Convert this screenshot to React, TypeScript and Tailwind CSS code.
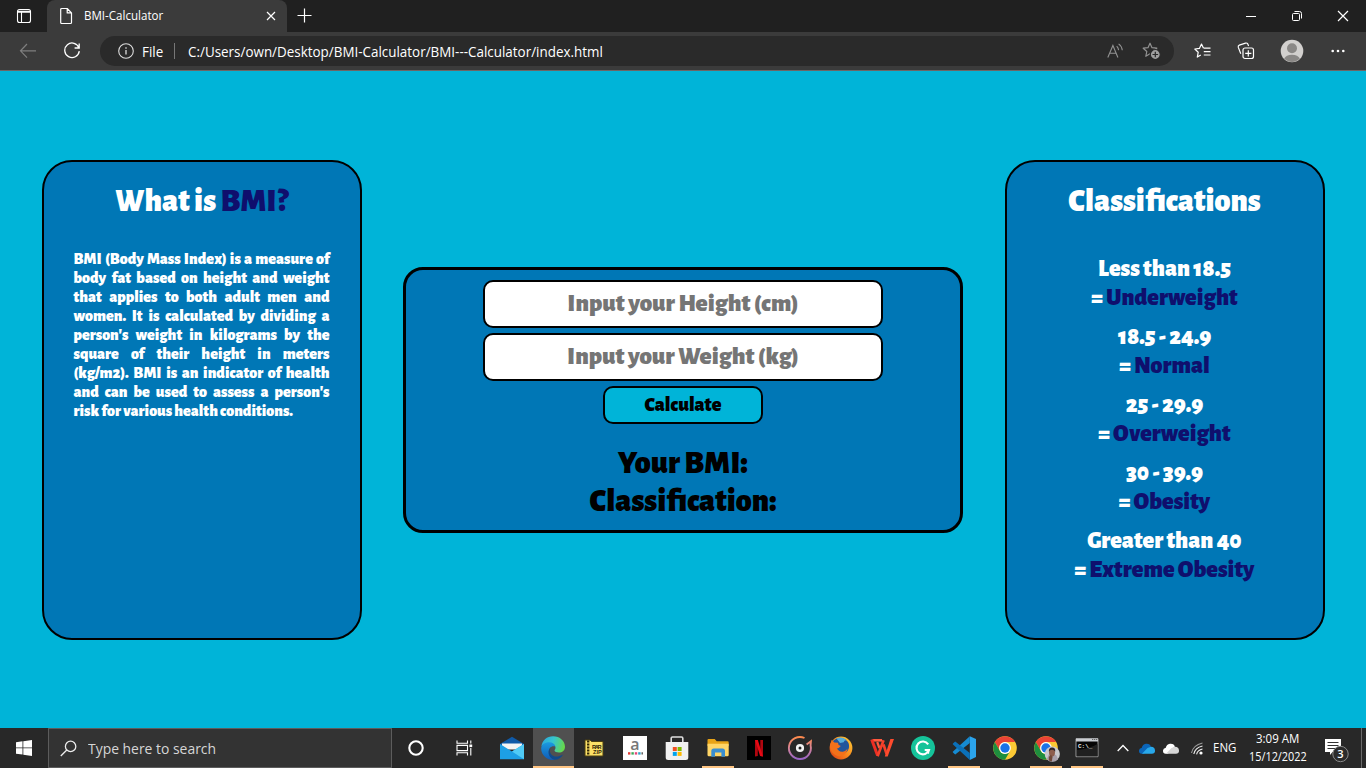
import { useLayoutEffect, useRef, useState, type ReactNode } from "react";

/** One line of text condensed or widened to an exact width. */
function Fit({ w, className = "", children }: { w: number; className?: string; children: ReactNode }) {
  const ref = useRef<HTMLSpanElement>(null);
  const [scale, setScale] = useState(1);
  useLayoutEffect(() => {
    if (ref.current) setScale(w / ref.current.offsetWidth);
  }, [w]);
  return (
    <span className={`block shrink-0 whitespace-nowrap ${className}`} style={{ width: w }}>
      <span ref={ref} className="inline-block origin-left" style={{ transform: `scaleX(${scale})` }}>
        {children}
      </span>
    </span>
  );
}

const classes = [
  { range: "Less than 18.5", name: "Underweight" },
  { range: "18.5 - 24.9", name: "Normal" },
  { range: "25 - 29.9", name: "Overweight" },
  { range: "30 - 39.9", name: "Obesity" },
  { range: "Greater than 40", name: "Extreme Obesity" },
];

function TitleBar() {
  return (
    <div className="flex h-8 bg-[#202020]">
      <div className="flex w-[47px] items-center justify-center">
        <svg width="16" height="16" viewBox="0 0 16 16" fill="none" stroke="#fff" strokeWidth="1.1">
          <rect x="1.5" y="1.5" width="13" height="13" rx="2" />
          <path d="M2 3.2h12M2 4.3h12M5.5 4v10" />
        </svg>
      </div>
      <div className="flex w-[240px] items-center rounded-t-lg bg-[#3b3b3b] pl-3">
        <svg width="14" height="18" viewBox="0 0 14 18" fill="none" stroke="#fff" strokeWidth="1.2" strokeLinejoin="round">
          <path d="M1.7 2.5a1 1 0 0 1 1-1h5.5l4.3 4.3v9.7a1 1 0 0 1-1 1H2.7a1 1 0 0 1-1-1zM8.2 1.5v4.4h4.3" />
        </svg>
        <Fit w={79} className="ml-[11px] text-[12px] text-white">BMI-Calculator</Fit>
        <svg className="ml-[103px]" width="10" height="10" viewBox="0 0 10 10" stroke="#fff" strokeWidth="1.2">
          <path d="M1 1l8 8M9 1L1 9" />
        </svg>
      </div>
      <svg className="mt-2 ml-[10px]" width="15" height="15" viewBox="0 0 15 15" stroke="#fff" strokeWidth="1.2">
        <path d="M7.5.5v14M.5 7.5h14" />
      </svg>
      <div className="ml-auto flex items-center">
        <svg className="w-[46px]" height="12" viewBox="-17 0 46 12" stroke="#fff"><path d="M1 6.5h10" /></svg>
        <svg className="w-[46px]" height="12" viewBox="-17 0 46 12" fill="none" stroke="#fff">
          <rect x="1.5" y="3.5" width="7" height="7" rx="1" />
          <path d="M3.5 1.5h5a2 2 0 0 1 2 2v5" />
        </svg>
        <svg className="w-[46px]" height="12" viewBox="-17 0 46 12" stroke="#fff" strokeWidth="1.2"><path d="M1 1l10 10M11 1L1 11" /></svg>
      </div>
    </div>
  );
}

const star = "M8 1.2l2 4.5 4.8.5-3.6 3.3 1 4.8L8 11.8l-4.2 2.5 1-4.8L1.2 6.2 6 5.7z";

function ToolBar() {
  return (
    <div className="flex h-[39px] items-center border-b border-[#6d6565] bg-[#3b3b3b]">
      <svg className="ml-[19px]" width="18" height="16" viewBox="0 0 18 16" fill="none" stroke="#7f7f7f" strokeWidth="1.2">
        <path d="M8 1L1.5 7.8 8 14.6M1.5 7.8H17" />
      </svg>
      <svg className="ml-[26px]" width="18" height="18" viewBox="0 0 18 18" fill="none" stroke="#fff" strokeWidth="1.3">
        <path d="M16 6A7.3 7.3 0 1 0 16.3 9.2M16.2 1.5V6h-4.6" />
      </svg>
      <div className="ml-[19px] flex h-[30px] w-[1074px] items-center rounded-full bg-[#2a2a2a] pl-[18px] text-white">
        <svg width="16" height="16" viewBox="0 0 16 16" fill="none" stroke="#ddd" strokeWidth="1.1">
          <circle cx="8" cy="8" r="7.3" />
          <path d="M8 7v4.5M8 4.3v1.4" strokeWidth="1.3" />
        </svg>
        <Fit w={21} className="ml-2 text-[14px]">File</Fit>
        <div className="ml-[11px] h-4 w-px bg-[#777]" />
        <Fit w={415} className="ml-[13px] text-[14px]">C:/Users/own/Desktop/BMI-Calculator/BMI---Calculator/index.html</Fit>
        <svg className="ml-[504px]" width="17" height="16" viewBox="0 0 17 16" fill="none" stroke="#929292" strokeWidth="1.1">
          <path d="M.8 14.5L5.9 2.5l5 12M2.6 10.3h6.6M9.7 3.1q1.7 1.6 1.9 4M11.6.9q3.3 2.3 3.7 6.4" />
        </svg>
        <svg className="ml-[18px]" width="19" height="18" viewBox="0 0 19 18" fill="none" stroke="#929292" strokeWidth="1.2">
          <path d={star} strokeLinejoin="round" />
          <circle cx="13.3" cy="12.5" r="5" fill="#a0a0a0" stroke="#2a2a2a" />
          <path d="M13.3 9.7v5.6M10.5 12.5h5.6" stroke="#2a2a2a" />
        </svg>
      </div>
      <svg className="ml-5" width="17" height="16" viewBox="0 0 17 16" fill="none" stroke="#fff" strokeWidth="1.2" strokeLinejoin="round">
        <path d="M9.5 5.3L7.5 1 5.4 5.4.8 6l3.4 3.3-.9 4.8 3.5-2M9.8 5.2h6.7M9.8 8.6h6.7M9.8 12h6.7" />
      </svg>
      <svg className="ml-[26px]" width="18" height="18" viewBox="0 0 18 18" fill="none" stroke="#fff" strokeWidth="1.2">
        <rect x="6" y="6" width="10.5" height="10.5" rx="2" />
        <path d="M11.3 8.2v6.2M8.2 11.3h6.2M3.8 11.7L1.3 5.4q-.5-1.7 1-2.3l6.2-2q1.6-.4 2.3 1l.8 1.8" />
      </svg>
      <svg className="ml-[25px]" width="24" height="24" viewBox="0 0 24 24">
        <circle cx="12" cy="12" r="11.3" fill="#d2d0ce" />
        <circle cx="12" cy="9.2" r="5" fill="#8a8886" />
        <path d="M4.2 19.5Q6 15.7 12 15.7t7.8 3.8A11.3 11.3 0 0 1 12 23a11.3 11.3 0 0 1-7.8-3.5z" fill="#8a8886" />
      </svg>
      <svg className="ml-[27px]" width="14" height="4" viewBox="0 0 14 4" fill="#fff">
        <circle cx="1.7" cy="2" r="1.3" /><circle cx="7" cy="2" r="1.3" /><circle cx="12.3" cy="2" r="1.3" />
      </svg>
    </div>
  );
}

function Page() {
  const input =
    "block h-12 w-[400px] rounded-[10px] border-2 border-black bg-white text-center text-[25px] font-black placeholder:text-[#757575] placeholder:opacity-100";
  return (
    <main className="flex h-[657px] items-center bg-[#00b4d8] pl-[42px] font-['Alegreya_Sans','Lato',sans-serif] font-black">
      <section className="h-[480px] w-[320px] rounded-[30px] border-2 border-black bg-[#0077b6] pt-5 text-white">
        <h1 className="pr-px text-center text-[32px] leading-[38px]">
          What is <span className="text-[#0f0f6d]">BMI?</span>
        </h1>
        <p className="mt-[30px] ml-[29.5px] w-[256px] text-justify text-[16px] leading-[19px]">
          BMI (Body Mass Index) is a measure of body fat based on height and weight that applies to both adult men and
          women. It is calculated by dividing a person's weight in kilograms by the square of their height in meters
          (kg/m2). BMI is an indicator of health and can be used to assess a person's{" "}
          <span className="whitespace-nowrap">risk for</span> various health conditions.
        </p>
      </section>

      <section className="ml-[41px] flex h-[266px] w-[560px] flex-col items-center rounded-[20px] border-[3px] border-black bg-[#0077b6] pt-[10px] text-black">
        <input className={input} placeholder="Input your Height (cm)" />
        <input className={`${input} mt-[5px]`} placeholder="Input your Weight (kg)" />
        <button className="mt-[5px] h-[38px] w-[160px] rounded-[10px] border-2 border-black bg-[#00b4d8] text-[20px] leading-[24px]">
          Calculate
        </button>
        <p className="mt-5 text-[32px] leading-[38px]">Your BMI:</p>
        <p className="text-[32px] leading-[38px]">Classification:</p>
      </section>

      <section className="ml-[42px] h-[480px] w-[320px] rounded-[30px] border-2 border-black bg-[#0077b6] pt-5 pr-px text-center text-white">
        <h1 className="text-[32px] leading-[38px]">Classifications</h1>
        <div className="mt-[35px] flex flex-col gap-[10px]">
          {classes.map((c) => (
            <p key={c.range} className="text-[24px] leading-[29px]">
              {c.range}
              <br />= <span className="text-[#0f0f6d]">{c.name}</span>
            </p>
          ))}
        </div>
      </section>
    </main>
  );
}

function Chrome() {
  return (
    <>
      <circle cx="12" cy="12" r="11.8" fill="#fcc934" />
      <path d="M1.8 6.1A11.8 11.8 0 0 1 22.2 6.1H12a5.9 5.9 0 0 0-5.1 8.8z" fill="#ea4335" />
      <path d="M1.8 6.1A11.8 11.8 0 0 0 12 23.8l5.1-8.9A5.9 5.9 0 0 1 6.9 15z" fill="#1e8e3e" />
      <circle cx="12" cy="12" r="5.9" fill="#fff" />
      <circle cx="12" cy="12" r="4.7" fill="#1a73e8" />
    </>
  );
}

const apps: { id: string; line?: string; art: ReactNode }[] = [
  {
    id: "mail",
    art: (
      <>
        <path d="M0 8L12 .7 24 8v4H0z" fill="#0f5aa8" />
        <path d="M2 7.5h20v6H2z" fill="#f4f4f4" />
        <path d="M0 8l12 7.5L24 8v15.3H0z" fill="#1d9fe5" />
        <path d="M24 8v15.3L12 15.5z" fill="#50cbf5" />
      </>
    ),
  },
  {
    id: "edge",
    line: "w-[41px]",
    art: (
      <>
        <defs>
          <linearGradient id="e1" x1="0" x2="1" y1=".2" y2=".4">
            <stop stopColor="#2aa7dd" /><stop offset=".5" stopColor="#36c5cf" /><stop offset="1" stopColor="#66d84c" />
          </linearGradient>
          <linearGradient id="e2" x1="0" x2="0" y1="0" y2="1">
            <stop stopColor="#1b9ae0" /><stop offset="1" stopColor="#105bb5" />
          </linearGradient>
        </defs>
        <path d="M.4 10.5C1.2 4.3 6 .2 12 .2 19 .2 24 5.1 24 10.7c0 3.6-2.7 5.8-6 5.8-2.5 0-4.5-.9-4.5-2 0-.7 1-1 1-2.8 0-2.4-2.6-4.7-6-4.7-3.8 0-6.6 1.4-8.1 3.5z" fill="url(#e1)" />
        <path d="M.2 12.4C.2 8.8 3.8 6.3 8.2 6.3c3.3 0 5.7 1.8 6.2 4.2-3.4-1.3-6.7 1-6.7 5 0 4.2 3 7.6 6.3 8.2C6.5 25 .2 19.3.2 12.4z" fill="url(#e2)" />
        <path d="M9.3 12.2c-1.8 5.1 2.6 9.1 7.8 8.2 2-.3 3.9-1.2 5.2-2.2-1.8 3.3-5.2 5.5-8.6 5.6-5.5-1.3-8-7.5-4.4-11.6z" fill="#114a8b" />
      </>
    ),
  },
  {
    id: "rar",
    art: (
      <>
        <path d="M3 5.5V4h5l1.5 1.5H21V20H3z" fill="#fbe067" stroke="#4b3f12" />
        <path d="M6.2 4.5v15" stroke="#302506" strokeWidth="2.3" strokeDasharray="2 1" />
        <text x="10" y="13" fontSize="5.6" fontWeight="900" fontFamily="Liberation Sans" fill="#302506" textLength="9.5">RAR</text>
        <text x="11" y="18.2" fontSize="5.6" fontWeight="900" fontFamily="Liberation Sans" fill="#302506">ZIP</text>
      </>
    ),
  },
  {
    id: "amazon",
    art: (
      <>
        <path d="M0 0h24v24H0z" fill="#fff" />
        <text x="12" y="14" textAnchor="middle" fontSize="16" fontWeight="600" fontFamily="Open Sans" fill="#777">a</text>
        <path d="M5 16.2h2.4v2.4H5z" fill="#e33d35" /><path d="M8.4 16.2h2.4v2.4H8.4z" fill="#3aa757" />
        <path d="M11.8 16.2h2.4v2.4h-2.4z" fill="#e6457a" /><path d="M15.2 16.2h2.4v2.4h-2.4z" fill="#2fa0c8" />
        <path d="M18.5 16.2h1.4v2.4h-1.4z" fill="#555" />
      </>
    ),
  },
  {
    id: "store",
    art: (
      <>
        <path d="M6.2 9V2.2a1.2 1.2 0 0 1 1.2-1.2h9.2a1.2 1.2 0 0 1 1.2 1.2V9" fill="none" stroke="#ddd" strokeWidth="1.6" />
        <path d="M.7 6h22.6v15.4a2.5 2.5 0 0 1-2.5 2.5H3.2a2.5 2.5 0 0 1-2.5-2.5z" fill="#f1f1f1" />
        <path d="M7.8 11h4v4h-4z" fill="#f25022" /><path d="M12.6 11h4v4h-4z" fill="#7fba00" />
        <path d="M7.8 15.9h4v4h-4z" fill="#00a4ef" /><path d="M12.6 15.9h4v4h-4z" fill="#ffb900" />
      </>
    ),
  },
  {
    id: "explorer",
    line: "w-8",
    art: (
      <>
        <path d="M1.5 4a1 1 0 0 1 1-1h6.2l2 2.2h11a1 1 0 0 1 1 1V10H1.5z" fill="#e8a317" />
        <path d="M1.5 7.8h21.2V19a1.2 1.2 0 0 1-1.2 1.2h-19A1.2 1.2 0 0 1 1.5 19z" fill="#ffd567" />
        <path d="M5.3 20.8V15a2.5 2.5 0 0 1 2.5-2.5h8.7A2.5 2.5 0 0 1 19 15v5.8h-3.6v-4.2H9v4.2z" fill="#3a8ed0" />
      </>
    ),
  },
  {
    id: "netflix",
    art: (
      <>
        <path d="M0 0h24v24H0z" />
        <path d="M8 4h2.8v16L8 20.4zM13.3 4H16v16.4l-2.7-.4z" fill="#b0060f" />
        <path d="M8 4h2.8L16 20.4l-2.9-.4z" fill="#e50914" />
      </>
    ),
  },
  {
    id: "groove",
    art: (
      <>
        <defs>
          <linearGradient id="gr" x1="0" x2="0" y1="0" y2="1">
            <stop stopColor="#ff8a4c" /><stop offset=".5" stopColor="#d78598" /><stop offset="1" stopColor="#9763c5" />
          </linearGradient>
        </defs>
        <path d="M16.5 2A11 11 0 1 0 22.6 9.5L22.9 5.2 18.6 8.4" fill="none" stroke="url(#gr)" strokeWidth="1.9" />
        <circle cx="12" cy="12" r="2.8" fill="#202020" stroke="#f3f3f3" strokeWidth="2.6" />
      </>
    ),
  },
  {
    id: "firefox",
    art: (
      <>
        <defs>
          <linearGradient id="ff" x1="1" x2="0" y1="0" y2="1">
            <stop stopColor="#ffd43a" /><stop offset=".5" stopColor="#fa8a1d" /><stop offset="1" stopColor="#dc3813" />
          </linearGradient>
        </defs>
        <circle cx="12" cy="12" r="11.4" fill="url(#ff)" />
        <path d="M3.5 5.5A9.8 9.8 0 0 1 19.5 7c2 5.2-1.4 10.8-6.5 10.8L7 12z" fill="#22559c" />
        <path d="M7.5 2.6Q13-.2 18 4.4q-2.7-.6-3.3 1.8L11 7z" fill="#56acd9" />
        <path d="M1 9L2.7 3.8l2.6 2.8L9 6.8 9.6 9l2.2.9-2.1 2.2-1.9.6q.8 3.2 6 3 2.8-.5 4.7-3-.9 5.9-6.5 7.4C6 21 1 16 1 9z" fill="#f3711a" />
      </>
    ),
  },
  {
    id: "wps",
    art: (
      <>
        <path d="M2.8 4.3H12" stroke="#ff5b3f" strokeWidth="2.6" />
        <path d="M1.7 3.6L7.6 19.6" stroke="#ed2f24" strokeWidth="3" />
        <path d="M7.2 6L9.4 12" stroke="#ff5b3f" strokeWidth="2.2" />
        <path d="M7.6 20.2L13.6 4.2M13.5 8.5L16.6 18" stroke="#f5402a" strokeWidth="2.6" />
        <path d="M14.8 20.5L20.4 3H24l-6.3 17.5z" fill="#ff4b2d" />
      </>
    ),
  },
  {
    id: "grammarly",
    art: (
      <>
        <circle cx="12" cy="12" r="12" fill="#15c39a" />
        <path d="M17.2 8.3A6.4 6.4 0 1 0 18 14h-4.3" fill="none" stroke="#fff" strokeWidth="2.1" />
        <path d="M14.5 16.2l3.5 1.7.7-5z" fill="#fff" />
      </>
    ),
  },
  {
    id: "code",
    line: "w-8",
    art: (
      <>
        <path d="M17.8.3L24 3v18l-6.2 3z" fill="#2ba4ec" />
        <path d="M17.8.3L1 15.4a.9.9 0 0 0 0 1.2l1.6 1.5a1 1 0 0 0 1.3 0L17.8 7z" fill="#168bd2" />
        <path d="M17.8 24L1 8.6a.9.9 0 0 1 0-1.2l1.6-1.5a1 1 0 0 1 1.3 0L17.8 17z" fill="#0b70b8" />
      </>
    ),
  },
  { id: "chrome", art: <Chrome /> },
  {
    id: "chrome-profile",
    line: "w-8",
    art: (
      <>
        <Chrome />
        <circle cx="18.3" cy="18" r="7.6" fill="#c9c8cd" />
        <path d="M12.7 23.2l2-4.5 3.6-1 4 1.5 1.8 4a7.6 7.6 0 0 1-11.4 0z" fill="#a9a0ab" />
        <ellipse cx="18" cy="16.4" rx="3" ry="4" fill="#8d5d4d" />
        <path d="M14.9 15.8q-.4-4 3.1-4.2 3.7 0 3.2 4.2-1.4-2.2-3.2-2-1.9-.2-3.1 2z" fill="#30252a" />
        <path d="M14.8 21l2-2.3 1.8 2-.8 4.7-3-1z" fill="#704839" />
      </>
    ),
  },
  {
    id: "cmd",
    line: "w-8",
    art: (
      <>
        <path d="M1 2.7h22v18H1z" fill="#050505" stroke="#9b9b9b" />
        <path d="M1 2.5h22v3H1z" fill="#c9cdd2" />
        <path d="M17 3.5h1.3M19 3.5h1.3M21 3.5h1.3" stroke="#666" />
        <path d="M2 14Q14 13 22.5 8v12.2H2z" fill="#202020" />
        <text x="3" y="11.5" fontSize="6" fontWeight="700" fontFamily="Liberation Mono" fill="#eee">C:\_</text>
      </>
    ),
  },
];

function TaskBar() {
  return (
    <footer className="flex h-10 bg-[#282828] text-white">
      <div className="flex w-12 items-center justify-center">
        <svg width="16" height="16" viewBox="0 0 16 16" fill="#fff">
          <path d="M0 2.2L6.5 1.3v6.2H0zM7.3 1.2L16 0v7.5H7.3zM0 8.3h6.5v6.3L0 13.7zM7.3 8.3H16V16l-8.7-1.2z" />
        </svg>
      </div>
      <div className="flex w-[344px] items-center border border-[#5c5c5c] bg-[#333] pl-[11px]">
        <svg width="17" height="17" viewBox="0 0 17 17" fill="none" stroke="#ececec" strokeWidth="1.3">
          <circle cx="10.6" cy="6.4" r="5.2" /><path d="M6.8 10L.8 16" />
        </svg>
        <Fit w={128} className="ml-[11px] text-[15px] text-[#d6d6d6]">Type here to search</Fit>
      </div>
      <div className="flex w-[47px] items-center justify-center">
        <svg width="16" height="16" viewBox="0 0 16 16" fill="none" stroke="#fff" strokeWidth="2.1"><circle cx="8" cy="8" r="6.7" /></svg>
      </div>
      <div className="flex w-[52.6px] items-center justify-center pr-[2.6px]">
        <svg width="17" height="16" viewBox="0 0 17 16" fill="none" stroke="#fff" strokeWidth="1.1">
          <path d="M1 .5v2.8h10.5V.5M1 15.5v-2.8h10.5v2.8M1 5.4h10.5v5.2H1zM14.8.5v3M14.8 8v7.5" />
          <path d="M13.4 4.5h2.8v2.6h-2.8z" fill="#fff" stroke="none" />
        </svg>
      </div>
      {apps.map((a) => (
        <div key={a.id} className={`relative flex w-[41.1px] shrink-0 items-center justify-center ${a.id === "edge" ? "bg-[#505050]" : ""}`}>
          <svg className="overflow-visible" width="24" height="24" viewBox="0 0 24 24">{a.art}</svg>
          {a.line && <i className={`absolute bottom-0 h-[2px] bg-[#ffc583] ${a.line}`} />}
        </div>
      ))}
      <div className="ml-[9px] flex items-center">
        <svg width="12" height="8" viewBox="0 0 12 8" fill="none" stroke="#fff" strokeWidth="1.3"><path d="M.7 7L6 1.5 11.3 7" /></svg>
        <svg className="ml-[10px]" width="16" height="11" viewBox="0 0 16 11">
          <path d="M0 8a3.2 3.2 0 0 1 2.8-3.3A5 5 0 0 1 12 3.2L5 10.7H3A2.8 2.8 0 0 1 0 8z" fill="#0b65b9" />
          <path d="M3 10.7L8.5 5l3.4-1.2A4 4 0 0 1 16 7.5a3 3 0 0 1-3 3.2z" fill="#28a8ea" />
        </svg>
        <svg className="ml-2" width="16" height="11" viewBox="0 0 16 11">
          <path d="M0 8a3.2 3.2 0 0 1 2.8-3.3A5 5 0 0 1 12 3.2L5 10.7H3A2.8 2.8 0 0 1 0 8z" fill="#fff" />
          <path d="M3 10.7L8.5 5l3.4-1.2A4 4 0 0 1 16 7.5a3 3 0 0 1-3 3.2z" fill="#d6d6d6" />
        </svg>
        <svg className="ml-[11px]" width="13" height="13" viewBox="0 0 13 13" fill="none" stroke="#eee" strokeWidth="1.1">
          <path d="M1.5 11Q3 3.2 12.5 1" stroke="#9a9a9a" />
          <path d="M3.8 12Q5 5.7 12.5 4M6.6 12.3Q7.6 8 12.5 7" />
          <circle cx="11" cy="11" r="1.6" fill="#fff" stroke="none" />
        </svg>
        <Fit w={23} className="ml-[10px] text-[12px]">ENG</Fit>
        <div className="ml-3 flex w-[59px] flex-col items-center text-[12px] leading-[18px]">
          <Fit w={43}>3:09 AM</Fit>
          <Fit w={58}>15/12/2022</Fit>
        </div>
        <svg className="mt-1 ml-[17px]" width="26" height="26" viewBox="0 0 26 26">
          <path d="M1 2h16v13H8.5L6 18v-3H1z" fill="#fff" />
          <path d="M3.5 5.5h11M3.5 8.5h11M3.5 11.5h8" stroke="#333" />
          <circle cx="16.5" cy="17" r="7.7" fill="#2b2b2b" stroke="#8a8a8a" />
          <text x="16.5" y="21" textAnchor="middle" fontSize="11" fontWeight="600" fill="#fff">3</text>
        </svg>
      </div>
      <div className="ml-auto w-[5px] border-l border-[#6a6a6a]" />
    </footer>
  );
}

export default function App() {
  return (
    <div className="flex h-[768px] w-[1366px] flex-col overflow-hidden font-['Segoe_UI','Open_Sans',sans-serif]">
      <TitleBar />
      <ToolBar />
      <Page />
      <TaskBar />
    </div>
  );
}
